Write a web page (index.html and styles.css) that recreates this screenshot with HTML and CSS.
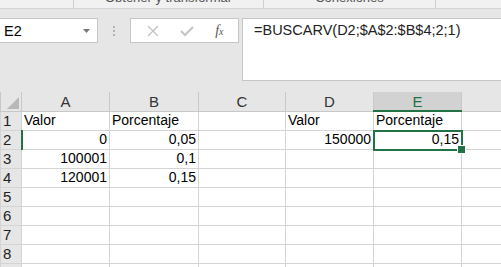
FILE: index.html
```html
<!DOCTYPE html>
<html lang="es">
<head>
    <meta charset="UTF-8">
    <title>BUSCARV</title>
    <link rel="stylesheet" href="styles.css">
</head>
<body>

    <!-- Pie de la cinta -->
    <div class="ribbon-foot">
        <div class="group g1"></div>
        <div class="group g2"><span>Obtener y transformar</span></div>
        <div class="group g3"><span>Conexiones</span></div>
        <div class="group g4"></div>
    </div>

    <!-- Barra de fórmulas -->
    <div class="formula-row">
        <div class="name-box">
            <span>E2</span>
            <svg class="caret" width="8" height="5" viewBox="0 0 8 5"><path d="M0 0h7L3.5 4z" fill="#777"/></svg>
        </div>
        <div class="grip"><i></i><i></i><i></i></div>
        <div class="fx-buttons">
            <svg width="12" height="12" viewBox="0 0 12 12"><path d="M1 1l10 10M11 1L1 11" stroke="#c4c4c4" stroke-width="1.4"/></svg>
            <svg width="14" height="12" viewBox="0 0 14 12"><path d="M1 6l4 4 8-8" stroke="#c4c4c4" stroke-width="2" fill="none"/></svg>
            <span class="fx">f<sub>x</sub></span>
        </div>
        <div class="formula">=BUSCARV(D2;$A$2:$B$4;2;1)</div>
    </div>

    <!-- Hoja -->
    <table class="sheet">
        <colgroup>
            <col class="c-num">
            <col class="c-a">
            <col class="c-b">
            <col class="c-c">
            <col class="c-d">
            <col class="c-e">
            <col class="c-f">
        </colgroup>
        <tr class="col-head">
            <th class="corner"></th>
            <th>A</th><th>B</th><th>C</th><th>D</th><th class="active">E</th><th></th>
        </tr>
        <tr>
            <th class="row-num">1</th>
            <td>Valor</td><td>Porcentaje</td><td></td><td>Valor</td><td>Porcentaje</td><td></td>
        </tr>
        <tr>
            <th class="row-num active">2</th>
            <td class="num">0</td><td class="num">0,05</td><td></td><td class="num">150000</td><td class="num selected">0,15</td><td></td>
        </tr>
        <tr>
            <th class="row-num">3</th>
            <td class="num">100001</td><td class="num">0,1</td><td></td><td></td><td></td><td></td>
        </tr>
        <tr>
            <th class="row-num">4</th>
            <td class="num">120001</td><td class="num">0,15</td><td></td><td></td><td></td><td></td>
        </tr>
        <tr><th class="row-num">5</th><td></td><td></td><td></td><td></td><td></td><td></td></tr>
        <tr><th class="row-num">6</th><td></td><td></td><td></td><td></td><td></td><td></td></tr>
        <tr><th class="row-num">7</th><td></td><td></td><td></td><td></td><td></td><td></td></tr>
        <tr><th class="row-num">8</th><td></td><td></td><td></td><td></td><td></td><td></td></tr>
        <tr><th class="row-num"></th><td></td><td></td><td></td><td></td><td></td><td></td></tr>
    </table>

</body>
</html>
```

FILE: styles.css
```css
/* Estilo global */
* {
    margin: 0;
    padding: 0;
    box-sizing: border-box;
}

body {
    font-family: 'Liberation Sans', Arial, sans-serif;
    background-color: #e6e6e6;
    color: #000;
    width: 501px;
    height: 267px;
    overflow: hidden;
}

/* Pie de la cinta */
.ribbon-foot {
    display: flex;
    height: 9px;
    background-color: #f1f1f1;
    border-bottom: 1px solid #d4d4d4;
    overflow: hidden;
}

.group {
    border-right: 1px solid #d0d0d0;
    height: 8px;
    text-align: center;
    font-size: 13px;
    color: #555;
    line-height: 14px;
}

.group span {
    display: block;
    margin-top: -9px;
}

.g1 { width: 74px; }
.g2 { width: 190px; }
.g3 { width: 172px; }
.g4 { flex: 1; border-right: none; }

/* Barra de fórmulas */
.formula-row {
    display: flex;
    align-items: flex-start;
    padding-top: 9px;
    height: 81px;
}

.name-box {
    width: 98px;
    height: 25px;
    background-color: #fff;
    border: 1px solid #c6c6c6;
    border-left: none;
    display: flex;
    align-items: center;
    justify-content: space-between;
    padding: 0 6px 0 4px;
    font-size: 14.5px;
}

.caret {
    margin-top: 1px;
}

.grip {
    width: 32px;
    height: 25px;
    display: flex;
    flex-direction: column;
    align-items: center;
    justify-content: center;
    gap: 2px;
}

.grip i {
    width: 2px;
    height: 2px;
    background-color: #b4b4b4;
}

.fx-buttons {
    width: 109px;
    height: 25px;
    background-color: #fff;
    border: 1px solid #c6c6c6;
    display: flex;
    align-items: center;
    justify-content: space-around;
    padding: 0 4px 0 6px;
}

.fx {
    font-family: 'Liberation Serif', serif;
    font-style: italic;
    font-size: 14px;
    color: #555;
}

.fx sub {
    font-size: 10px;
    vertical-align: 0;
}

.formula {
    margin-left: 3px;
    flex: 1;
    height: 63px;
    background-color: #fff;
    border: 1px solid #c6c6c6;
    border-right: none;
    padding: 3px 0 0 11px;
    font-size: 14.5px;
    color: #222;
}

/* Hoja */
.sheet {
    margin-top: 2px;
    border-collapse: collapse;
    table-layout: fixed;
    width: 549px;
    background-color: #fff;
    font-size: 14px;
}

.c-num { width: 21px; }
.c-a { width: 88px; }
.c-b { width: 89px; }
.c-c { width: 87px; }
.c-d { width: 88px; }
.c-e { width: 88px; }
.c-f { width: 88px; }

.sheet td,
.sheet th {
    height: 19px;
    border: 1px solid #d4d4d4;
    padding: 0 2px;
    white-space: nowrap;
    overflow: visible;
    line-height: 17px;
    font-weight: normal;
}

.sheet td {
    text-align: left;
}

.sheet td.num {
    text-align: right;
}

.col-head th {
    background-color: #e6e6e6;
    border-color: #c8c8c8;
    border-top: none;
    text-align: center;
    font-size: 15px;
    color: #333;
}

.col-head th.active {
    background-color: #d2d2d2;
    color: #217346;
    border-bottom: 2px solid #217346;
}

.corner {
    position: relative;
}

.corner::after {
    content: "";
    position: absolute;
    right: 2px;
    bottom: 2px;
    border-style: solid;
    border-width: 0 0 12px 12px;
    border-color: transparent transparent #b8b8b8 transparent;
}

.row-num {
    background-color: #e6e6e6;
    border-color: #c8c8c8;
    border-left: none;
    text-align: left;
    font-size: 15px;
    color: #222;
    padding-left: 3px;
}

.sheet th.row-num.active {
    border-right: 2px solid #217346;
}

.selected {
    position: relative;
}

.selected::after {
    content: "";
    position: absolute;
    left: -1px;
    top: -1px;
    right: -2px;
    bottom: -2px;
    border: 2px solid #217346;
}

.selected::before {
    content: "";
    position: absolute;
    right: -5px;
    bottom: -5px;
    width: 7px;
    height: 7px;
    background-color: #217346;
    border: 1px solid #fff;
    z-index: 1;
}
```
